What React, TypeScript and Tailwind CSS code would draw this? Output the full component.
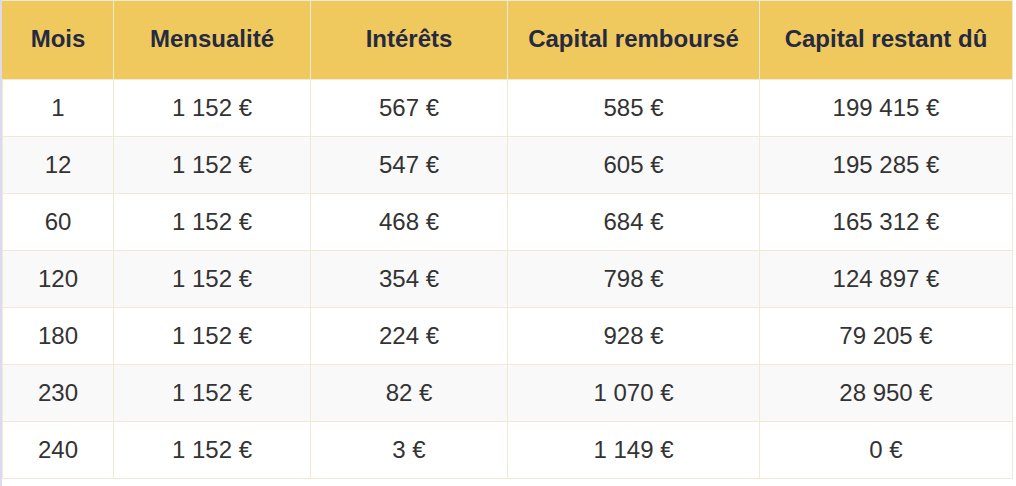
import React from 'react'

const rows = [
  ['1', '1 152 €', '567 €', '585 €', '199 415 €'],
  ['12', '1 152 €', '547 €', '605 €', '195 285 €'],
  ['60', '1 152 €', '468 €', '684 €', '165 312 €'],
  ['120', '1 152 €', '354 €', '798 €', '124 897 €'],
  ['180', '1 152 €', '224 €', '928 €', '79 205 €'],
  ['230', '1 152 €', '82 €', '1 070 €', '28 950 €'],
  ['240', '1 152 €', '3 €', '1 149 €', '0 €'],
]

const headers = ['Mois', 'Mensualité', 'Intérêts', 'Capital remboursé', 'Capital restant dû']

export default function App() {
  return (
    <div className="w-[1016px] h-[486px] overflow-hidden bg-white border-l-2 border-[#dcdaee] font-['Liberation_Sans',Arial,sans-serif]">
      <table className="table-fixed border-collapse w-[1010px] text-[24px]">
        <colgroup>
          <col className="w-[111px]" />
          <col className="w-[197px]" />
          <col className="w-[197px]" />
          <col className="w-[252px]" />
          <col className="w-[253px]" />
        </colgroup>
        <thead>
          <tr className="h-[79px] bg-[#efc95e]">
            {headers.map((h, i) => (
              <th
                key={i}
                className={
                  'border border-[#f0e9d6] font-bold text-[#262a40] text-center align-middle pb-[3px]' +
                  (i === 0 ? " relative before:content-[''] before:absolute before:-left-[3px] before:top-0 before:bottom-0 before:w-[3px] before:bg-[#efc95e]" : '')
                }
              >
                {h}
              </th>
            ))}
          </tr>
        </thead>
        <tbody>
          {rows.map((r, ri) => (
            <tr key={ri} className={'h-[57px] ' + (ri % 2 === 1 ? 'bg-[#f9f9f9]' : 'bg-white')}>
              {r.map((c, ci) => (
                <td key={ci} className="border border-[#f0e9d6] text-center align-middle text-[#333333]">
                  {c}
                </td>
              ))}
            </tr>
          ))}
        </tbody>
      </table>
    </div>
  )
}
